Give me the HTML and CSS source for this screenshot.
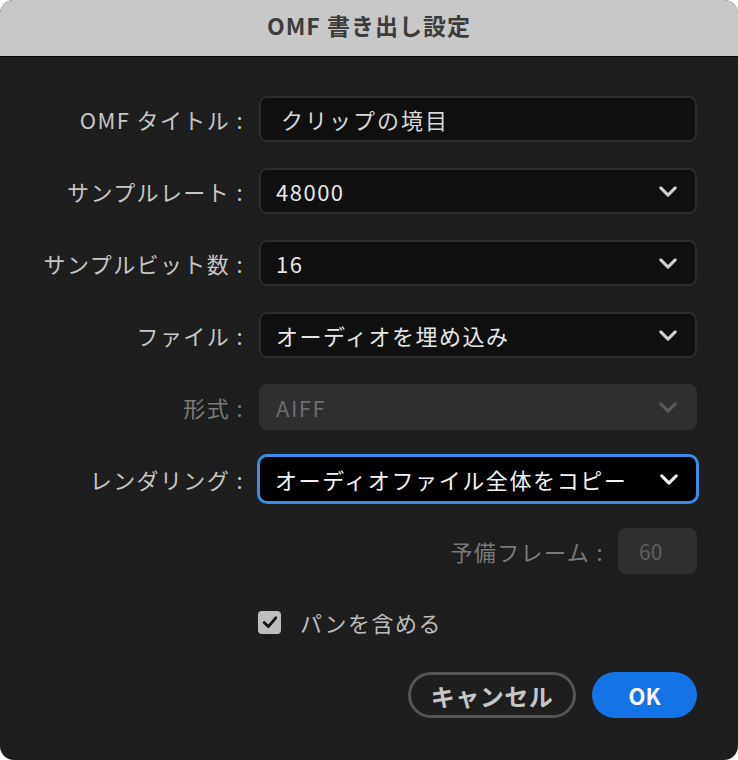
FILE: index.html
```html
<!DOCTYPE html>
<html lang="ja">
<head>
<meta charset="utf-8">
<link rel="stylesheet" href="styles.css">
</head>
<body>
<div class="window">
  <div class="titlebar">OMF 書き出し設定</div>
  <div class="content">
    <div class="form">
      <div class="label">OMF タイトル :</div>
      <div class="field text">クリップの境目</div>

      <div class="label">サンプルレート :</div>
      <div class="field select"><span>48000</span><svg class="chev" viewBox="0 0 20 12"><path d="M2 2 L10 10 L18 2"/></svg></div>

      <div class="label">サンプルビット数 :</div>
      <div class="field select"><span>16</span><svg class="chev" viewBox="0 0 20 12"><path d="M2 2 L10 10 L18 2"/></svg></div>

      <div class="label">ファイル :</div>
      <div class="field select"><span>オーディオを埋め込み</span><svg class="chev" viewBox="0 0 20 12"><path d="M2 2 L10 10 L18 2"/></svg></div>

      <div class="label dim">形式 :</div>
      <div class="field select disabled"><span>AIFF</span><svg class="chev" viewBox="0 0 20 12"><path d="M2 2 L10 10 L18 2"/></svg></div>

      <div class="label">レンダリング :</div>
      <div class="field select focus"><span>オーディオファイル全体をコピー</span><svg class="chev" viewBox="0 0 20 12"><path d="M2 2 L10 10 L18 2"/></svg></div>
    </div>

    <div class="spare">
      <div class="label dim">予備フレーム :</div>
      <div class="small-input">60</div>
    </div>

    <div class="check-row">
      <div class="checkbox"><svg viewBox="0 0 24 24"><path d="M5 12.5 L10 17.5 L19 7"/></svg></div>
      <div class="check-label">パンを含める</div>
    </div>

    <div class="buttons">
      <div class="btn cancel">キャンセル</div>
      <div class="btn ok">OK</div>
    </div>
  </div>
</div>
</body>
</html>
```

FILE: styles.css
```css
html, body {
  margin: 0;
  padding: 0;
  background: #ffffff;
}
body {
  font-family: "Noto Sans CJK JP", "Noto Sans", sans-serif;
}
.window {
  width: 738px;
  height: 760px;
  border-radius: 14px;
  overflow: hidden;
  background: #1e1e1e;
  display: flex;
  flex-direction: column;
}
.titlebar {
  height: 57px;
  box-sizing: border-box;
  background: #c8c8c8;
  border-bottom: 1px solid #0a0a0a;
  display: flex;
  align-items: center;
  justify-content: center;
  font-size: 23px;
  font-weight: 700;
  letter-spacing: 1px;
  color: #3c3c3c;
  padding-bottom: 6px;
}
.content {
  flex: 1;
  padding-top: 39px;
}
.form {
  display: grid;
  grid-template-columns: 244px 438px;
  column-gap: 15px;
  row-gap: 26px;
}
.label {
  font-size: 22px;
  color: #c6c6c6;
  text-align: right;
  align-self: center;
  white-space: nowrap;
  letter-spacing: 1.4px;
}
.label.dim {
  color: #7a7a7a;
}
.field {
  height: 46px;
  box-sizing: border-box;
  border: 2px solid #2c2c2c;
  border-radius: 8px;
  background: #0f0f0f;
  color: #e6e6e6;
  font-size: 22px;
  letter-spacing: 1.5px;
  display: flex;
  align-items: center;
}
.field.text {
  padding-left: 20px;
  color: #d8d8d8;
  letter-spacing: 2px;
}
.field.select {
  padding-left: 15px;
  padding-right: 18px;
  justify-content: space-between;
}
.chev {
  width: 18px;
  height: 11px;
  fill: none;
  stroke: #d0d0d0;
  stroke-width: 3.4;
  stroke-linecap: round;
  stroke-linejoin: round;
}
.field.disabled {
  background: #2f2f2f;
  border-color: #2f2f2f;
  color: #6c6c6c;
}
.field.disabled .chev {
  stroke: #5a5a5a;
}
.field.focus {
  background: #000000;
  border: 1px solid #000;
  outline: 3px solid #3a8ce6;
  outline-offset: -1px;
  color: #f4f4f4;
  letter-spacing: 1.6px;
}
.field.focus .chev {
  stroke: #f0f0f0;
}
.spare {
  display: flex;
  justify-content: flex-end;
  align-items: center;
  gap: 14px;
  margin-top: 26px;
  padding-right: 41px;
}
.small-input {
  width: 79px;
  height: 46px;
  box-sizing: border-box;
  background: #2f2f2f;
  border-radius: 8px;
  color: #5e5e5e;
  font-size: 21px;
  display: flex;
  align-items: center;
  padding-left: 21px;
}
.check-row {
  display: flex;
  align-items: center;
  margin-top: 32px;
  padding-left: 258px;
  gap: 19px;
}
.checkbox {
  width: 23px;
  height: 23px;
  border-radius: 4px;
  background: #bdbdbd;
  display: flex;
  align-items: center;
  justify-content: center;
}
.checkbox svg {
  width: 20px;
  height: 20px;
  fill: none;
  stroke: #111;
  stroke-width: 3.4;
  stroke-linecap: round;
  stroke-linejoin: round;
}
.check-label {
  font-size: 22px;
  color: #bcbcbc;
  letter-spacing: 1.5px;
}
.buttons {
  display: flex;
  justify-content: flex-end;
  gap: 16px;
  margin-top: 34px;
  padding-right: 41px;
}
.btn {
  height: 46px;
  box-sizing: border-box;
  border-radius: 23px;
  display: flex;
  align-items: center;
  justify-content: center;
  font-weight: 700;
  font-size: 22px;
}
.btn.cancel {
  width: 168px;
  border: 3px solid #555555;
  color: #c6c6c6;
  font-size: 24px;
  letter-spacing: 0.5px;
}
.btn.ok {
  width: 105px;
  background: #1473e6;
  color: #ffffff;
}
```
